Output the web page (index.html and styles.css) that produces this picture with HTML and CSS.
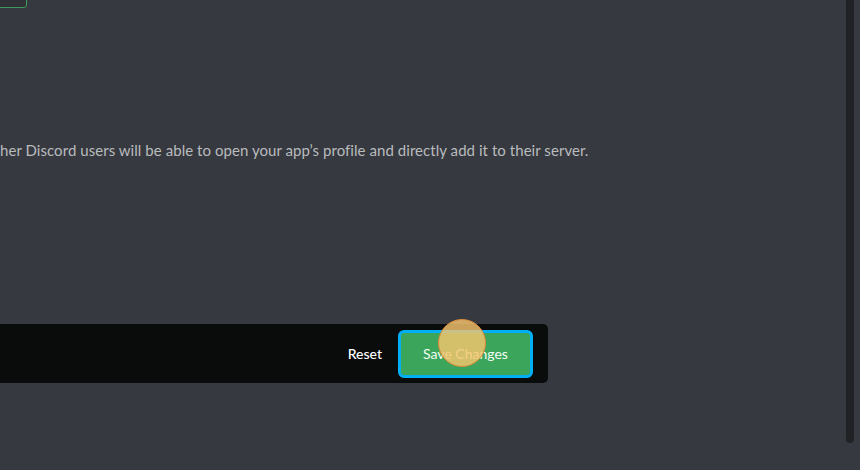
FILE: index.html
```html
<!DOCTYPE html>
<html>
<head>
<meta charset="utf-8">
<link rel="stylesheet" href="styles.css">
</head>
<body>
<div class="page">
  <main class="content">
    <div class="top-box"></div>
    <p class="desc">her Discord users will be able to open your app’s profile and directly add it to their server.</p>
    <div class="savebar">
      <button class="reset">Reset</button>
      <div class="save-wrap">
        <button class="save">Save Changes</button>
        <span class="cursor-dot"></span>
      </div>
    </div>
  </main>
  <div class="scrollbar"><div class="thumb"></div></div>
</div>
</body>
</html>
```
FILE: styles.css
```css
html, body {
  margin: 0;
  padding: 0;
  height: 100%;
  background: #36393f;
  overflow: hidden;
}
.page {
  display: flex;
  height: 470px;
  font-family: Lato, "Noto Sans", sans-serif;
}
.content {
  flex: 1;
  overflow: hidden;
  display: flex;
  flex-direction: column;
}
.top-box {
  margin-top: -30px;
  margin-left: -40px;
  width: 65px;
  height: 36px;
  border: 1px solid #3e9a58;
  border-radius: 3px;
  background: #2f3136;
  flex: none;
}
.desc {
  margin: 132px 0 0 0;
  white-space: nowrap;
  color: #b9bbbe;
  font-size: 15px;
  line-height: 20px;
  letter-spacing: 0.055px;
}
.savebar {
  margin-top: 164px;
  width: 548px;
  height: 59px;
  background: #0a0b0b;
  border-radius: 0 5px 5px 0;
  display: flex;
  align-items: center;
  justify-content: flex-end;
  padding-right: 15px;
  box-sizing: border-box;
}
.reset {
  background: none;
  border: 0;
  color: #ffffff;
  font-family: inherit;
  font-size: 14px;
  font-weight: 500;
  padding: 0 16px 0 0;
  height: 32px;
}
.save-wrap {
  position: relative;
}
.save {
  display: block;
  width: 135px;
  height: 48px;
  box-sizing: border-box;
  background: #3ba55c;
  border: 3px solid #00aff4;
  border-radius: 6px;
  color: #f2fff4;
  font-family: inherit;
  font-size: 14px;
  font-weight: 400;
  padding: 0;
}
.cursor-dot {
  position: absolute;
  left: 40px;
  top: -11px;
  width: 46px;
  height: 46px;
  border-radius: 50%;
  background: rgba(246, 196, 110, 0.82);
  border: 1.5px solid #d98b3a;
}
.scrollbar {
  width: 11px;
  flex: none;
  padding-right: 3px;
}
.thumb {
  width: 8px;
  height: 443px;
  background: #202225;
  border-radius: 0 0 4px 4px;
}
```
